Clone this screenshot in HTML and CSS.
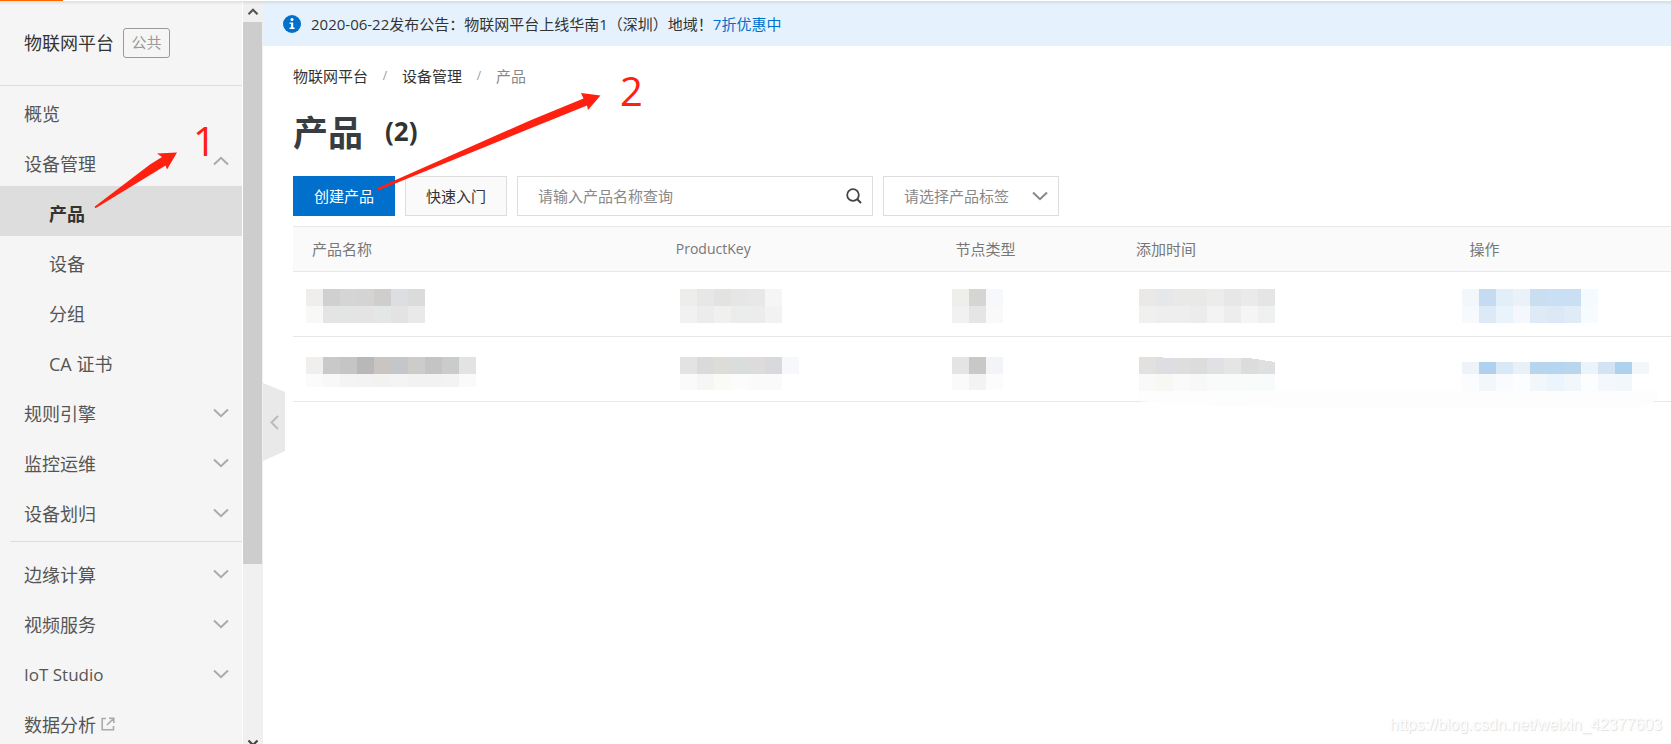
FILE: index.html
```html
<!DOCTYPE html>
<html lang="zh-CN">
<head>
<meta charset="utf-8">
<title>物联网平台 - 产品</title>
<link rel="stylesheet" href="styles.css">
</head>
<body>
<svg class="defs" width="0" height="0" aria-hidden="true">
  <symbol id="chev" viewBox="0 0 16 10"><path d="M1 1.5 8 8.2 15 1.5" fill="none" stroke="currentColor" stroke-width="2"/></symbol>
</svg>
<div class="topline"><span class="topline-brand"></span></div>
<div class="shell">
  <aside class="sidebar">
    <header class="side-head"><span class="side-title">物联网平台</span><span class="badge">公共</span></header>
    <nav class="menu">
      <a class="item" href="#">概览</a>
      <a class="item" href="#">设备管理<svg class="chev up"><use href="#chev"/></svg></a>
      <a class="item sub active" href="#">产品</a>
      <a class="item sub" href="#">设备</a>
      <a class="item sub" href="#">分组</a>
      <a class="item sub" href="#">CA 证书</a>
      <a class="item" href="#">规则引擎<svg class="chev"><use href="#chev"/></svg></a>
      <a class="item" href="#">监控运维<svg class="chev"><use href="#chev"/></svg></a>
      <a class="item" href="#">设备划归<svg class="chev"><use href="#chev"/></svg></a>
      <hr class="rule">
      <a class="item" href="#">边缘计算<svg class="chev"><use href="#chev"/></svg></a>
      <a class="item" href="#">视频服务<svg class="chev"><use href="#chev"/></svg></a>
      <a class="item" href="#"><span class="latin">IoT Studio</span><svg class="chev"><use href="#chev"/></svg></a>
      <a class="item" href="#">数据分析<svg class="ext" viewBox="0 0 14 14"><path d="M5 1.5H1.2V12.8H12.5V9M8 1.2H12.8V6M12.5 1.5 6 8" fill="none" stroke="currentColor" stroke-width="1.6"/></svg></a>
    </nav>
  </aside>
  <div class="scroll" aria-hidden="true">
    <svg class="scroll-arrow" viewBox="0 0 20 21"><path d="M5.5 13.2 10 8.7 14.5 13.2" fill="none" stroke="#555" stroke-width="2.2"/></svg>
    <div class="thumb"></div>
    <svg class="scroll-arrow end" viewBox="0 0 20 21"><path d="M5.5 17.5 10 22 14.5 17.5" fill="none" stroke="#444" stroke-width="2.2"/></svg>
  </div>
  <main class="main">
    <button class="handle" type="button" aria-label="收起"><svg viewBox="0 0 22 78"><path d="M0 0 22 9V68L0 78Z" fill="#e9e9e9"/><path d="M15 33 8.500 39.500 15 46" fill="none" stroke="#bbb" stroke-width="2"/></svg></button>
    <div class="notice">
      <svg class="info" viewBox="0 0 18 18"><circle cx="9" cy="9" r="9" fill="#0070cc"/><circle cx="9" cy="4.600" r="1.500" fill="#fff"/><path d="M6.500 7.400H10.200V12.600H11.600V14H6.600V12.600H8V8.700H6.500Z" fill="#fff"/></svg>
      <span>2020-06-22发布公告：物联网平台上线华南1（深圳）地域！<a href="#">7折优惠中</a></span>
    </div>
    <div class="content">
      <nav class="crumbs"><a href="#">物联网平台</a><i>/</i><a href="#">设备管理</a><i>/</i><span>产品</span></nav>
      <h1 class="title">产品<span class="count">(2)</span></h1>
      <form class="tools">
        <button class="btn primary" type="button">创建产品</button>
        <button class="btn" type="button">快速入门</button>
        <label class="search"><input type="text" placeholder="请输入产品名称查询" aria-label="产品名称"><svg viewBox="0 0 16 16"><circle cx="7" cy="7" r="5.800" fill="none" stroke="#444" stroke-width="1.800"/><path d="M11 11 15 15" stroke="#444" stroke-width="2"/></svg></label>
        <label class="tag"><select aria-label="产品标签"><option>请选择产品标签</option></select><svg class="chev"><use href="#chev"/></svg></label>
      </form>
      <table class="table">
        <colgroup><col class="c-name"><col class="c-key"><col class="c-type"><col class="c-time"><col class="c-ops"></colgroup>
        <thead><tr><th>产品名称</th><th class="latin">ProductKey</th><th>节点类型</th><th>添加时间</th><th>操作</th></tr></thead>
        <tbody id="rows"></tbody>
      </table>
    </div>
  </main>
</div>
<svg class="marks" width="1671" height="744" aria-hidden="true">
  <path d="M1139 391H1658C1658 397 1654 405 1641 408H1330C1260 408 1160 404 1139 401Z" fill="#fdfdfd"/>
  <path d="M94.500 206.800 150 164.500 162 157 157 153.500 177 152.500 167 169.500 165.500 165.500 155 172 95.500 208.200Z" fill="#ff2010"/>
  <path d="M377 188.300 530 120.500 583.500 98.500 581 93 600.500 95.500 588 110 587 105.500 530 128.500 378 190.500Z" fill="#ff2010"/>
  <text x="193" y="156">1</text>
  <text x="620" y="106">2</text>
</svg>
<div class="watermark">https://blog.csdn.net/weixin_42377603</div>
<script src="rows.js"></script>
</body>
</html>
```

FILE: styles.css
```css
* { box-sizing: border-box; }
body {
  margin: 0;
  position: relative;
  height: 100vh;
  overflow: hidden;
  display: flex;
  flex-direction: column;
  background: #fff;
  color: #333;
  font: 15px/20px "Open Sans", "Noto Sans CJK SC", sans-serif;
}
a { color: inherit; text-decoration: none; }
button, input, select { font: inherit; color: inherit; }
.defs { position: absolute; }

.topline { height: 1px; background: #fff; flex: none; }
.topline-brand { display: block; width: 63px; height: 1px; background: #ff6a00; }
.shell { display: flex; flex: 1; min-height: 0; position: relative; }
.shell::before {
  content: "";
  position: absolute;
  top: 0;
  left: 0;
  right: 0;
  height: 4px;
  z-index: 1;
  background: linear-gradient(rgba(0, 0, 0, .09), rgba(0, 0, 0, 0));
}

.sidebar { width: 243px; flex: none; overflow: hidden; background: #f5f5f5; border-right: 1px solid #fff; }
.side-head {
  display: flex;
  align-items: center;
  height: 85px;
  padding: 0 0 0 24px;
  border-bottom: 1px solid #ddd;
  font-size: 18px;
}
.side-title { margin-right: 9px; }
.badge {
  width: 47px;
  height: 30px;
  border: 1px solid #999;
  border-radius: 3px;
  color: #999;
  font-size: 15px;
  line-height: 27px;
  text-align: center;
}
.item {
  display: flex;
  align-items: center;
  height: 50px;
  padding: 6px 13px 0 24px;
  color: #555;
  font-size: 18px;
}
.sub { padding-left: 49px; }
.active { background: #ddd; color: #333; font-weight: 700; }
.item .latin { font-size: 17px; }
.chev { width: 16px; height: 10px; color: #aaa; flex: none; }
.item .chev { margin: 0 0 2px auto; }
.item .up { transform: rotate(180deg); margin-bottom: 6px; }
.ext { width: 14px; height: 14px; margin: 0 0 2px 5px; color: #aaa; }
.rule { height: 1px; margin: 5px 0 5px 10px; border: 0; background: #ddd; }

.scroll { display: flex; flex-direction: column; width: 20px; flex: none; background: #f0f0f0; overflow: hidden; }
.scroll-arrow { width: 20px; height: 21px; flex: none; }
.thumb { width: 19px; height: 73%; flex: none; background: #cdcdcd; }
.end { margin-top: auto; overflow: visible; }

.main { flex: 1; min-width: 0; position: relative; }
.handle { position: absolute; left: 0; top: 382px; width: 22px; height: 78px; padding: 0; border: 0; background: none; }
.handle svg { display: block; width: 22px; height: 78px; }
.notice { display: flex; align-items: center; height: 45px; padding: 0 20px; background: #e5f2fd; }
.notice a { color: #0070cc; }
.info { width: 18px; height: 18px; margin-right: 10px; }
.content { padding-left: 30px; }
.crumbs { display: flex; padding-top: 20px; }
.crumbs i { width: 34px; color: #999; font-size: 12px; font-style: normal; text-align: center; }
.crumbs span { color: #888; }
.title {
  display: flex;
  align-items: center;
  gap: 22px;
  margin: 24px 0 20px;
  color: #373d41;
  font-size: 35px;
  line-height: 46px;
}
.count { color: #333; font-size: 26px; line-height: 40px; padding-bottom: 4px; }

.tools { display: flex; gap: 10px; margin: 0 0 10px; }
.btn { width: 102px; height: 40px; padding: 0; border: 1px solid #ddd; background: #fafafa; }
.primary { border-color: #0070cc; background: #0070cc; color: #fff; }
.search, .tag { display: flex; align-items: center; height: 40px; border: 1px solid #ddd; }
.search { width: 356px; padding-right: 10px; }
.search input { flex: 1; min-width: 0; height: 38px; padding: 0 20px; border: 0; background: none; }
.search input::placeholder { color: #888; }
.search svg { width: 16px; height: 16px; }
.tag { position: relative; width: 176px; }
.tag select { width: 100%; height: 38px; padding: 0 0 0 20px; border: 0; background: none; appearance: none; color: #888; }
.tag .chev { position: absolute; right: 10px; color: #888; pointer-events: none; }

.table { width: 100%; table-layout: fixed; border-collapse: collapse; }
.c-name { width: 26.4%; }
.c-key { width: 20.3%; }
.c-type { width: 13.1%; }
.c-time { width: 24.2%; }
.c-ops { width: 16%; }
.table tr { border-bottom: 1px solid #e8e8e8; }
.table thead tr { border-top: 1px solid #e8e8e8; background: #fafafa; }
.table th { height: 45px; padding: 0 0 0 19px; color: #777; font-weight: 400; text-align: left; }
.table th.latin { font-size: 14px; }
.table td { height: 65px; padding: 17px 0 0 13px; vertical-align: top; }
.table tr + tr td { padding-top: 20px; }
.table td:nth-child(2) { padding-left: 23px; }
.table td:nth-child(3) { padding-left: 15px; }
.table td:nth-child(4) { padding-left: 22px; }
.table td:nth-child(5) { padding-left: 12px; }
.mosaic { display: block; height: 34px; }

.marks { position: absolute; left: 0; top: 0; z-index: 2; pointer-events: none; }
.marks text { fill: #ff2010; font-size: 40px; }
.watermark {
  position: absolute;
  right: 9px;
  bottom: 9px;
  color: #fff;
  text-shadow: 1px 1px 1px #ddd, 0 0 1px #eee;
  font: 16px/20px "Liberation Sans", sans-serif;
}
```

FILE: rows.js
```js
// Each masked value is a two-line grid of colour blocks; top is where its first line begins.
const rows = [
  [
    { a: "efeeec d0d0d0 d5d5d5 d4d4d4 d0cecd dcdee1 dbdbdb", b: "f8f8f6 e4e4e4 e2e5e4 e3e4e3 e3e7e6 e3e3e4 e9e9e9" },
    { a: "ededeb e7e7e7 e3e3e1 e6e6e6 e8e8e8 f5f5f5", b: "f1f1f1 ececec f0f0ee eaedec ececec f2f2f2" },
    { a: "eeeeeb d5d5d3 f6f8fb", b: "f1f1f1 e5e5e5 f9f9f9" },
    { a: "eae9e7 e5e7ea e9e9e7 e9e9e7 ececec e7e7e7 eaeaea e5e5e5", b: "f0f0ef eeeeee eeeeee ececec f3f3f3 ededed f5f5f5 eff1f1" },
    { a: "f2f7fb c4dbf2 e2eff9 ebf1f9 c9dff0 c8dff4 cadff2 f4fafd", b: "f6fafd dde9f6 e9f3fc f4f8fc deebf7 dce8f5 dfebf6 f6fbfd" }
  ],
  [
    { h: 30, a: "f0efee c9c9c9 c5c5c5 b8b8b8 c8c5c3 c4c6c9 cecccb c4c4c4 cacccb e3e3e3", b: "fbfbfb f8f8f8 f4f4f4 f3f3f3 f2f2f0 f4f4f4 f2f2f2 f2f2f2 f3f3f3 fafafa" },
    { h: 33, a: "e3e3e3 dadada dddcd8 d8dddd dddcda d8d9dc f6f8fb", b: "fafafa f6f6f4 fafaf7 fcfcfc fafafa fafafa ffffff" },
    { h: 33, a: "e4e4e4 c8c8c6 f2f4f8", b: "fafafa f3f3f3 fcfcfc" },
    { a: "e2e1df dcdee1 dedede dcdcdc dfe1e4 e5e5e5 dcdcdc dee0df", b: "f8f9f8 f7f7f4 fafafa f8f8f8 f9fbfa f8fbfa f9fafa f8fbfb", curve: true },
    { top: 5, a: "eef3fa afd0ee d8e8f6 e8f0f8 b7d6ee b5d5f0 b9d6ed ecf4fb d2e3f3 aed2ed f2f7fc", b: "fbfcfe f2f7fc f9fbfe fcfdff f2f7fb ecf4fd f2f7fb fcfdff f4f8fc f2f7fb ffffff" }
  ]
];

const size = 17;
function mosaic({ a, b, top = 0, h = 34, curve }) {
  const first = a.split(" ");
  const second = b.split(" ");
  const width = first.length * size;
  let out = `<svg class="mosaic" width="${width}" height="34" shape-rendering="crispEdges">`;
  first.forEach((c, i) => {
    out += `<rect x="${i * size}" y="${top}" width="${size}" height="${size - top}" fill="#${c}"/>`;
    out += `<rect x="${i * size}" y="${size}" width="${size}" height="${h - size}" fill="#${second[i]}"/>`;
  });
  if (curve) out += '<path d="M18 0 30 1 110 1 136 5V0Z" fill="#fff"/>';
  return out + "</svg>";
}

document.getElementById("rows").innerHTML = rows
  .map(r => "<tr>" + r.map(c => `<td>${mosaic(c)}</td>`).join("") + "</tr>")
  .join("");
```
